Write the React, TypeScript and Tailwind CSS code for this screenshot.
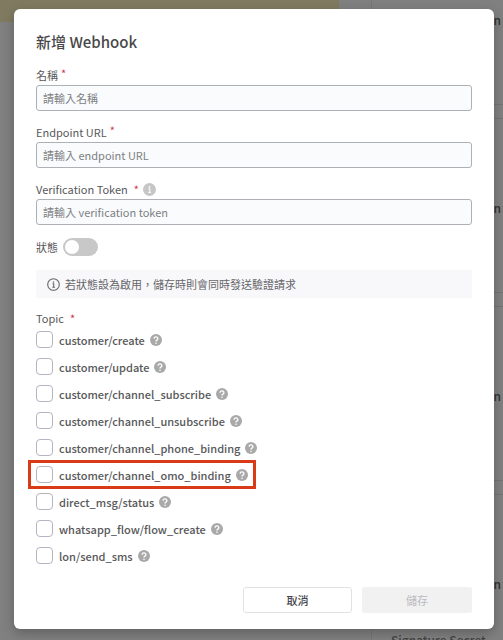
import React from "react";

const topics = [
  "customer/create",
  "customer/update",
  "customer/channel_subscribe",
  "customer/channel_unsubscribe",
  "customer/channel_phone_binding",
  "customer/channel_omo_binding",
  "direct_msg/status",
  "whatsapp_flow/flow_create",
  "lon/send_sms",
];

const highlighted = "customer/channel_omo_binding";

function HelpIcon() {
  return (
    <svg viewBox="0 0 24 24" className="size-3 shrink-0" aria-hidden="true">
      <circle cx="12" cy="12" r="12" fill="#a9a9a9" />
      <path
        d="M8.2 9.3a3.8 3.5 0 1 1 5.6 3c-1.3.8-1.8 1.3-1.8 2.7"
        fill="none"
        stroke="#fff"
        strokeWidth="2.6"
      />
      <circle cx="12" cy="18.4" r="1.6" fill="#fff" />
    </svg>
  );
}

function InfoBadge() {
  return (
    <svg viewBox="0 0 26 26" className="ml-1 size-[13px] shrink-0" aria-hidden="true">
      <circle cx="13" cy="13" r="13" fill="#c6c6c6" />
      <circle cx="13" cy="7.6" r="1.7" fill="#fff" />
      <path d="M10.8 11.4H13.6V18.4M10.4 18.8H16" fill="none" stroke="#fff" strokeWidth="2" />
    </svg>
  );
}

function InfoOutline() {
  return (
    <svg viewBox="0 0 26 26" className="size-[13px] shrink-0" fill="none" stroke="#66666a" strokeWidth="2.2" aria-hidden="true">
      <circle cx="13" cy="13" r="11.6" />
      <path d="M11 11.6H13.4V18.4M10.6 18.6H16" />
      <circle cx="13" cy="7.8" r="1.5" fill="#66666a" stroke="none" />
    </svg>
  );
}

interface FieldProps {
  id: string;
  label: string;
  placeholder: string;
  info?: boolean;
}

function Field({ id, label, placeholder, info }: FieldProps) {
  return (
    <div className="flex flex-col gap-0.5">
      <div className="flex h-4 items-center">
        <label htmlFor={id} className="text-[11px] leading-4 text-[#58585a]">
          {label}
        </label>
        <span className={info ? "ml-1.5 text-[11px] leading-4 text-[#d0324f]" : "ml-[3px] -mt-1 text-[11px] leading-4 text-[#d0324f]"}>*</span>
        {info && <InfoBadge />}
      </div>
      <input
        id={id}
        type="text"
        placeholder={placeholder}
        className="h-[26px] w-full rounded-[3px] border border-[#adb1b5] bg-[#f9fbfd] px-1.5 text-[11px] text-[#444] outline-none placeholder:text-[#7d7f82]"
      />
    </div>
  );
}

function BackgroundCard() {
  return (
    <div className="flex h-[188px] flex-col items-end">
      <span className="h-[104px] pt-2 pr-0.5 text-[12px] leading-6 font-medium text-[#333]">Channel token</span>
      <div className="h-[15px] w-24 border border-r-0 border-[#737373]" />
    </div>
  );
}

export default function App() {
  return (
    <div className="relative min-h-screen overflow-hidden bg-[#808080] font-['Noto_Sans_CJK_TC','Noto_Sans',sans-serif]">
      <div className="absolute inset-0 flex overflow-hidden" aria-hidden="true">
        <div className="flex-1">
          <div className="mr-8 h-[22px] bg-[#807a60]" />
        </div>
        <div className="w-[132px] shrink-0 border-l border-[#777]">
          <BackgroundCard />
          <BackgroundCard />
          <BackgroundCard />
          <div className="h-[66px] pt-2 pr-0.5 text-right text-[12px] leading-6 font-medium text-[#333]">Channel token</div>
          <div className="pl-[19px] text-[12px] leading-5 font-medium whitespace-nowrap text-[#444]">Signature Secret</div>
        </div>
      </div>

      <div className="relative pt-[9px] pr-[9px] pb-[11px] pl-3.5">
        <form
          role="dialog"
          aria-labelledby="dialog-title"
          className="rounded-md bg-white px-[22px] pt-[21px] pb-4 shadow-[0_4px_12px_rgba(0,0,0,0.25)]"
        >
          <h1 id="dialog-title" className="text-[15px] leading-6 font-medium text-[#48484a]">
            新增 Webhook
          </h1>

          <div className="mt-[13px] flex flex-col gap-[13px]">
            <Field id="name" label="名稱" placeholder="請輸入名稱" />
            <Field id="endpoint" label="Endpoint URL" placeholder="請輸入 endpoint URL" />
            <Field id="token" label="Verification Token" placeholder="請輸入 verification token" info />
          </div>

          <div className="mt-3 flex h-5 items-center gap-[5px]">
            <label htmlFor="status" className="text-[11px] leading-4 text-[#58585a]">
              狀態
            </label>
            <input
              id="status"
              type="checkbox"
              role="switch"
              className="flex h-[18px] w-[35px] appearance-none items-center rounded-full bg-[#c8c8c8] px-0.5 before:size-3.5 before:rounded-full before:bg-white checked:justify-end checked:bg-[#3a7bea]"
            />
          </div>

          <div className="mt-[13px] flex h-7 items-center gap-[5px] bg-[#f8f8fa] px-[11px] text-[11px] text-[#66666a]">
            <InfoOutline />
            <p>若狀態設為啟用，儲存時則會同時發送驗證請求</p>
          </div>

          <fieldset className="mt-3">
            <legend className="flex h-4 items-center gap-1.5 text-[11px] leading-4 text-[#58585a]">
              Topic <span className="text-[#d0324f]">*</span>
            </legend>
            <div className="flex flex-col">
              {topics.map((topic) => (
                <div key={topic} className="flex h-[27px]">
                  <div
                    className={
                      topic === highlighted
                        ? "-mx-2 -my-px flex items-center gap-[5px] border-[3px] border-[#d93a18] px-[5px]"
                        : "flex items-center gap-[5px]"
                    }
                  >
                    <label className="flex items-center gap-1.5 text-[11px] leading-4 font-medium text-[#58585a]">
                      <input
                        type="checkbox"
                        className="size-[17px] shrink-0 appearance-none rounded-[4px] border border-[#b4b4c2] bg-white checked:bg-[#3a7bea]"
                      />
                      {topic}
                    </label>
                    <HelpIcon />
                  </div>
                </div>
              ))}
            </div>
          </fieldset>

          <div className="mt-[18px] flex justify-end gap-2.5">
            <button type="button" className="h-[26px] w-[109px] rounded-[3px] border border-[#e2e2e6] bg-white text-[11px] font-medium text-[#444448]">
              取消
            </button>
            <button type="submit" disabled className="h-[26px] w-[110px] rounded-[2px] bg-[#f1f1f1] text-[11px] text-[#b9b9bf]">
              儲存
            </button>
          </div>
        </form>
      </div>
    </div>
  );
}
